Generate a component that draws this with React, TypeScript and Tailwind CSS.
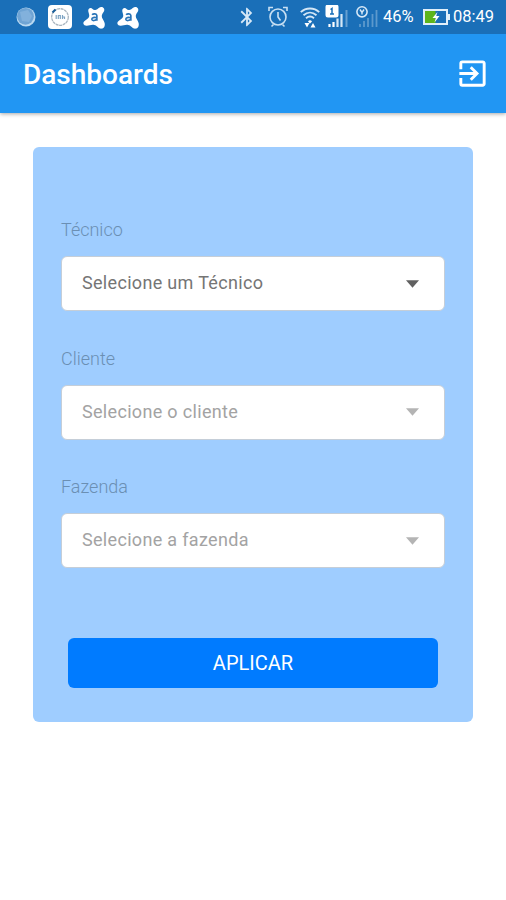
import { MdBluetooth, MdExitToApp } from 'react-icons/md';

const fields = [
  { label: 'Técnico', placeholder: 'Selecione um Técnico', disabled: false },
  { label: 'Cliente', placeholder: 'Selecione o cliente', disabled: true },
  { label: 'Fazenda', placeholder: 'Selecione a fazenda', disabled: true },
];

function AvastIcon({ className }: { className: string }) {
  return (
    <svg viewBox="0 0 24 24" className={className}>
      <path
        d="M6.500 3.200C7.500 1.800 9.500 1.900 10.500 3.200c.8 1 2.200 1.200 3.600.8 2-.6 3-2.700 5.200-3 2.800-.3 4.300 2.400 3 4.700-.8 1.500-2.100 2.800-2.200 4.800-.1 2.500 2.200 4.500 2.900 7 .9 3-.4 5.800-3 6.100-3.300.3-4.500-3.200-7.700-3.900-3-.7-5.300.9-8.100.8-3.300-.1-4.500-3.300-1.700-5.200 1.800-1.200 4-2 4.500-4.500.5-2.600-2-5.200-.5-7.600z"
        fill="#fff"
      />
      <path
        d="M10 9.200c1.300-1.400 4.800-1.400 5 .9v5.300M15 12.200c-2.700-.6-5.400-.2-5.300 1.600.2 2 4.300 1.800 5.300-.3"
        fill="none"
        stroke="#2a75b8"
        strokeWidth="1.700"
      />
    </svg>
  );
}

function StatusBar() {
  return (
    <div className="relative z-10 flex h-[34px] items-center bg-[#1a6fb8] text-white">
      <svg viewBox="0 0 20 20" className="ml-4 size-5 shrink-0">
        <circle cx="10" cy="10" r="9.500" fill="#b9d8f0" />
        <circle cx="9.500" cy="9.300" r="8.400" fill="#6fa4d4" />
        <path d="M4 5l8-2 4 6-3 6-7-1z" fill="#82b1dc" />
      </svg>
      <svg viewBox="0 0 24 24" className="ml-[12px] size-6 shrink-0">
        <rect width="24" height="24" rx="4" fill="#fff" />
        <circle cx="12" cy="12" r="8.300" fill="none" stroke="#a9b5bf" strokeWidth="1.300" strokeDasharray="3 .6" />
        <path d="M4.500 7.500l3-3" stroke="#1b5f99" strokeWidth="2.200" />
        <path d="M8.200 10v4M10.300 14v-3.500h2V14M14.500 10v4M14.500 12h2v2" fill="none" stroke="#7da4c4" strokeWidth="1.200" />
      </svg>
      <AvastIcon className="ml-[10px] h-[23px] w-6 shrink-0" />
      <AvastIcon className="ml-[10px] h-[23px] w-6 shrink-0" />

      <MdBluetooth className="ml-[96px] size-[22px] shrink-0 text-[#d6e8f7]" />
      <svg viewBox="0 0 20 22" className="ml-[10px] h-[22px] w-5 shrink-0" fill="none" stroke="#c9e0f3" strokeWidth="1.600">
        <circle cx="10" cy="11" r="8" />
        <path d="M1 5V1.500h4M15 1.500h4V5M3.500 20.500l2-2M16.500 20.500l-2-2M10 6v5l2.500 3.500" />
      </svg>
      <svg viewBox="0 0 20 22" className="ml-[12px] h-[22px] w-5 shrink-0" fill="none" stroke="#d3e6f6" strokeWidth="1.900">
        <path d="M.8 6.200c5-5 13.400-5 18.400 0M3.500 9.300c4-3.600 9-3.600 13 0M6 12.300c2.600-2.300 5.400-2.300 8 0" />
        <path d="M8 15.500c1-1.800 3-1.800 4 0l-2 2zM4.500 17h5L7 21.500zM10.500 21.500h5l-2.500-4.500z" fill="#fff" stroke="none" />
      </svg>
      <svg viewBox="0 0 24 24" className="ml-[5px] size-6 shrink-0">
        <path d="M4.500 19v3M8.500 17v5" stroke="#fff" strokeWidth="2.200" />
        <path d="M12.500 13.500V22M16.500 9v13" stroke="#d4e7f6" strokeWidth="2.200" />
        <path d="M21.500 5v17" stroke="#659fd0" strokeWidth="2" />
        <rect x=".5" y="-.5" width="13" height="13" rx="2.500" fill="#fff" />
        <path d="M5.500 4.500l1.500-1v5.500M5 9h4" fill="none" stroke="#1a6fb8" strokeWidth="1.500" />
      </svg>
      <svg viewBox="0 0 24 24" className="ml-[7px] size-6 shrink-0" fill="none">
        <path d="M4 19v3M8 16v6M12 13v9M16.500 9v13M20.500 5v17" stroke="#5c99cd" strokeWidth="1.800" />
        <circle cx="6" cy="6.800" r="5.100" fill="#1a6fb8" stroke="#d6e8f7" strokeWidth="1.600" />
        <path d="M4 4.500l2 3 2-3M6 7v2.500" stroke="#d6e8f7" strokeWidth="1.400" />
      </svg>
      <span className="ml-[3px] w-[40px] whitespace-nowrap pt-px text-[16.500px]">46%</span>
      <svg viewBox="0 0 27 16" className="h-4 w-[27px] shrink-0">
        <rect x="1" y="1" width="23" height="14" fill="none" stroke="#e0effa" strokeWidth="2" />
        <path d="M2 2h10.500v12H2z" fill="#5db51b" />
        <path d="M24 5h3v6h-3z" fill="#e0effa" />
        <path d="M14.500 3L9.500 9h3.300l-1.300 4.500 5-6.500h-3.300z" fill="#fff" />
      </svg>
      <span className="ml-[3px] whitespace-nowrap pt-px text-[16.500px]">08:49</span>
    </div>
  );
}

function SelectField({ label, placeholder, disabled }: (typeof fields)[number]) {
  return (
    <div>
      <div className="mb-3 h-7 text-[18px] leading-7 font-light text-[#6b8fb3]">{label}</div>
      <button
        disabled={disabled}
        className="flex h-[55px] w-full items-center justify-between rounded-md border border-[#c5ced8] bg-white pr-[25px] pl-5"
      >
        <span className={`pb-[2px] text-[18px] tracking-[0.32px] ${disabled ? 'text-[#a3a3a3]' : 'text-[#757575]'}`}>
          {placeholder}
        </span>
        <svg viewBox="0 0 14 8" className={`h-[8px] w-[13px] ${disabled ? 'fill-[#b4b4b4]' : 'fill-[#606060]'}`}>
          <path d="M0 0h14L7 8z" />
        </svg>
      </button>
    </div>
  );
}

export default function App() {
  return (
    <div className="min-h-screen bg-white font-['Roboto',sans-serif]">
      <StatusBar />
      <header className="flex h-[79px] items-center justify-between bg-[#2196f3] pr-4 pl-[23px] text-white shadow-[0_1px_4px_rgba(0,0,0,0.35)]">
        <h1 className="pt-[3px] text-[28px] font-medium">Dashboards</h1>
        <MdExitToApp className="size-[35px]" />
      </header>

      <main className="mx-[33px] mt-[34px] h-[575px] rounded-md bg-[#9fcdff] px-[28px] pt-[69px]">
        <div className="flex flex-col gap-[33.7px]">
          {fields.map((field) => (
            <SelectField key={field.label} {...field} />
          ))}
        </div>
        <div className="mt-[69.500px] px-[7px]">
          <button className="h-[50px] w-full rounded-md bg-[#007bff] text-[20px] text-white">APLICAR</button>
        </div>
      </main>
    </div>
  );
}
